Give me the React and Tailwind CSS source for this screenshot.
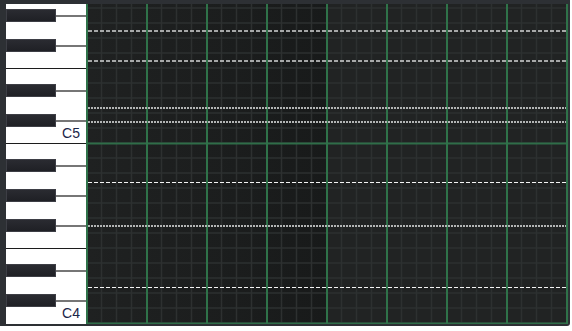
import React from 'react';

const ROWS = [
  'G#5', 'G5', 'F#5', 'F5', 'E5', 'D#5', 'D5', 'C#5', 'C5',
  'B4', 'A#4', 'A4', 'G#4', 'G4', 'F#4', 'F4', 'E4', 'D#4', 'D4', 'C#4', 'C4',
];

// notes drawn over the grid: y in grid coords, style
const NOTES = [
  { y: 27, kind: 'soft' },
  { y: 57, kind: 'soft' },
  { y: 104, kind: 'dots' },
  { y: 118, kind: 'dots' },
  { y: 178.5, kind: 'sharp' },
  { y: 222, kind: 'dots' },
  { y: 283.5, kind: 'sharp' },
];

function KeyRow({ note }) {
  const black = note.includes('#');
  const edge = note.startsWith('B') || note.startsWith('E');
  const isC = note.startsWith('C') && !black;

  if (black) {
    return (
      <div className="h-[15px] flex items-center">
        <div className="w-[50px] h-[13px] bg-gradient-to-b from-[#2a2b31] to-[#1f2025] border border-[#3d3e45]" />
        <div className="flex-1 h-[2px] bg-[#767676]" />
      </div>
    );
  }
  return (
    <div className={`h-[15px] ${edge ? 'border-t border-[#1c1c1c]' : ''}`}>
      {isC && (
        <div className="text-right pr-[6px] text-[14px] leading-[11px] text-[#1b2548] font-['Liberation_Sans',Arial,sans-serif]">
          {note}
        </div>
      )}
    </div>
  );
}

function Keyboard() {
  return (
    <div className="w-[80px] h-[320px] bg-white flex flex-col">
      <div className="h-[4px]" />
      {ROWS.map((n) => (
        <KeyRow key={n} note={n} />
      ))}
    </div>
  );
}

function Grid() {
  const w = 482;
  const h = 320;
  const minor = [];
  for (let x = 15; x < 480; x += 15) if (x % 60 !== 0) minor.push(x);
  const rows = [];
  for (let k = 0; k <= 21; k++) rows.push(4 + k * 15);

  return (
    <div className="relative w-[482px] h-[320px] flex">
      <div className="w-[240px] h-full bg-gradient-to-r from-[#1f2121] via-[#1c1e1e] to-[#181a1a]" />
      <div className="flex-1 h-full bg-[#212323]" />
      <svg className="absolute inset-0" width={w} height={h} viewBox={`0 0 ${w} ${h}`}>
        {rows.map((y) => (
          <rect key={'r' + y} x={0} y={y - 0.75} width={w} height={1.5} fill="#2d3030" />
        ))}
        {minor.map((x) => (
          <rect key={'m' + x} x={x - 0.25} y={0} width={1.5} height={h} fill="#2d3030" />
        ))}
        <rect x={0} y={138.5} width={w} height={2} fill="#2f6d48" />
        <rect x={0} y={318.5} width={w} height={1.5} fill="#2f6d48" />
        {[0, 60, 120, 180, 240, 300, 360, 420, 480].map((x) => (
          <rect key={'b' + x} x={x} y={0} width={2} height={h} fill="#2f7249" />
        ))}
        {NOTES.map((n, i) => {
          if (n.kind === 'dots')
            return <line key={i} x1={2} x2={480} y1={n.y} y2={n.y} stroke="#b3b5b5" strokeWidth={2} strokeDasharray="2 1" />;
          if (n.kind === 'soft')
            return <line key={i} x1={2} x2={480} y1={n.y} y2={n.y} stroke="#d3d5d5" strokeWidth={1.5} strokeDasharray="4 2" />;
          return <line key={i} x1={2} x2={480} y1={n.y} y2={n.y} stroke="#f4f4f4" strokeWidth={1} strokeDasharray="4 2" />;
        })}
      </svg>
    </div>
  );
}

export default function App() {
  return (
    <div className="w-[572px] h-[331px] bg-white">
      <div className="w-[570px] h-[326px] bg-[#2d3034] pl-[6px] pt-[4px] pr-[2px] pb-[2px] flex rounded-br-[3px]">
        <Keyboard />
        <Grid />
      </div>
    </div>
  );
}
